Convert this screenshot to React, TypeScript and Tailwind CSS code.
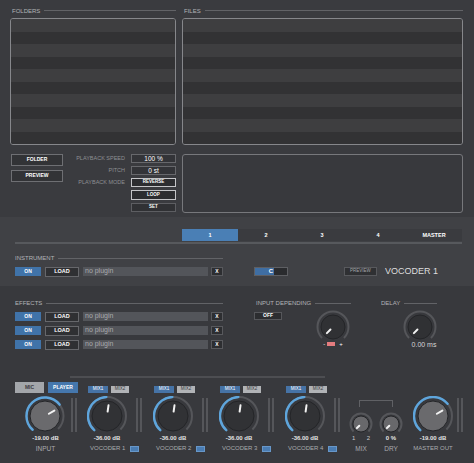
// App.tsx
type KnobProps = {
  size: number
  r: number
  inner: number
  fill: string
  angle: number
  arcTo?: number
}

function Knob({ size, r, inner, fill, angle, arcTo }: KnobProps) {
  const c = size / 2
  const pt = (a: number, rad: number) => [
    c + rad * Math.sin((a * Math.PI) / 180),
    c - rad * Math.cos((a * Math.PI) / 180),
  ]
  const arc = (a0: number, a1: number, rad: number) => {
    const [x0, y0] = pt(a0, rad)
    const [x1, y1] = pt(a1, rad)
    const large = a1 - a0 > 180 ? 1 : 0
    return `M${x0} ${y0} A${rad} ${rad} 0 ${large} 1 ${x1} ${y1}`
  }
  const [ix0, iy0] = pt(angle, inner * 0.3)
  const [ix1, iy1] = pt(angle, inner * 0.72)
  return (
    <svg width={size} height={size} viewBox={`0 0 ${size} ${size}`} className="block shrink-0">
      <path d={arc(-135, 135, r)} stroke="#55565a" strokeWidth={2} fill="none" />
      {arcTo !== undefined && (
        <path d={arc(-138, arcTo, r)} stroke="#5ea5dc" strokeWidth={2.4} fill="none" strokeLinecap="round" />
      )}
      <circle cx={c} cy={c} r={inner} fill={fill} stroke="#242528" strokeWidth={1} />
      <line x1={ix0} y1={iy0} x2={ix1} y2={iy1} stroke="#f2f2f2" strokeWidth={2} strokeLinecap="round" />
    </svg>
  )
}

function Caption({ text, className = '' }: { text: string; className?: string }) {
  return (
    <div className={`flex items-center gap-[4px] ${className}`}>
      <span className="text-[6px] leading-none text-[#b2b3b7] whitespace-nowrap">{text}</span>
      <div className="flex-1 h-px bg-[#626367]" />
    </div>
  )
}

function Striped() {
  return (
    <div className="h-[127px] border border-[#86878b] rounded-[3px] overflow-hidden flex flex-col">
      {[0, 1, 2, 3, 4, 5, 6, 7, 8, 9].map((i) => (
        <div key={i} className={i % 2 === 0 ? 'flex-1 bg-[#3e3e40]' : 'flex-1 bg-[#323234]'} />
      ))}
    </div>
  )
}

function PluginRow() {
  return (
    <div className="flex items-center h-[9px]">
      <div className="w-[26px] h-full bg-[#4073a9] flex items-center justify-center text-[5px] font-bold text-white">ON</div>
      <div className="ml-[4px] w-[34px] h-[10px] border border-[#66676b] bg-[#2f3033] flex items-center justify-center text-[5.5px] font-bold text-white">
        LOAD
      </div>
      <div className="ml-[4px] w-[125px] h-full bg-[#53555a] pl-[2px] flex items-center text-[7px] text-[#a9aaae]">no plugin</div>
      <div className="ml-[3px] w-[12px] h-full border border-[#58595d] bg-[#2d2e31] flex items-center justify-center text-[5px] font-bold text-white">
        X
      </div>
    </div>
  )
}

function Meters() {
  return (
    <div className="mt-[2px] flex gap-[2px]">
      <div className="w-[2px] h-[34px] bg-[#55565a]" />
      <div className="w-[2px] h-[34px] bg-[#55565a]" />
    </div>
  )
}

function VocoderColumn({ n }: { n: number }) {
  return (
    <div className="w-[66px] flex flex-col">
      <div className="h-[11px] flex items-end pl-[3px] gap-[3px]">
        <div className="w-[20px] h-[7px] bg-[#4673a6] flex items-center justify-center text-[4.5px] text-white">MIX1</div>
        <div className="w-[18px] h-[7px] bg-[#b1b3b6] flex items-center justify-center text-[4.5px] text-[#3b3c40]">MIX2</div>
      </div>
      <div className="mt-[3px] h-[40px] flex pl-[2px]">
        <Knob size={40} r={19} inner={15} fill="#313235" angle={8} arcTo={-2} />
        <div className="ml-[9px]">
          <Meters />
        </div>
      </div>
      <div className="-mt-[2px] ml-[2px] w-[40px] h-[8px] flex items-center justify-center text-[6px] font-bold text-[#e4e4e4] whitespace-nowrap">
        -36.00 dB
      </div>
      <div className="mt-[2px] h-[9px] pl-[5px] flex items-center gap-[5px]">
        <span className="text-[6px] text-[#a9aaae] whitespace-nowrap">VOCODER {n}</span>
        <div className="w-[9px] h-[6px] bg-[#4a7cb2] border border-[#6797c9]" />
      </div>
    </div>
  )
}

export default function App() {
  return (
    <div className="w-[474px] h-[463px] overflow-hidden font-['Liberation_Sans','Arial',sans-serif] select-none">
      {/* Browser */}
      <div className="h-[217px] bg-[#3a3b3f] px-[10px] pt-[3px]">
        <div className="flex gap-[6px]">
          <div className="w-[166px]">
            <Caption text="FOLDERS" className="h-[15px] pl-[2px]" />
            <Striped />
          </div>
          <div className="w-[281px]">
            <Caption text="FILES" className="h-[15px] pl-[2px]" />
            <Striped />
          </div>
        </div>
        <div className="flex gap-[6px] mt-[9px]">
          <div className="w-[166px] flex">
            <div className="w-[53px] pl-[1px] flex flex-col gap-[4px]">
              <div className="h-[12px] border border-[#6e6f73] bg-[#323336] flex items-center justify-center text-[5px] font-bold text-white">
                FOLDER
              </div>
              <div className="h-[12px] border border-[#6e6f73] bg-[#323336] flex items-center justify-center text-[5px] font-bold text-white">
                PREVIEW
              </div>
            </div>
            <div className="w-[62px] flex flex-col items-end gap-[3px] text-[5.5px] text-[#8e8f93]">
              <div className="h-[9px] flex items-center whitespace-nowrap">PLAYBACK SPEED</div>
              <div className="h-[9px] flex items-center">PITCH</div>
              <div className="h-[9px] flex items-center whitespace-nowrap">PLAYBACK MODE</div>
            </div>
            <div className="ml-[6px] w-[45px] flex flex-col gap-[3px]">
              <div className="h-[9px] border border-[#67686c] bg-[#333438] flex items-center justify-center text-[6.5px] text-white">100 %</div>
              <div className="h-[9px] border border-[#67686c] bg-[#333438] flex items-center justify-center text-[6.5px] text-white">0 st</div>
              <div className="h-[9px] border border-[#c4c5c8] bg-[#2c2d30] flex items-center justify-center text-[4.5px] font-bold text-white">
                REVERSE
              </div>
              <div className="h-[10px] border border-[#c4c5c8] bg-[#2c2d30] flex items-center justify-center text-[4.5px] font-bold text-white">
                LOOP
              </div>
              <div className="h-[9px] border border-[#5d5e62] bg-[#303134] flex items-center justify-center text-[4.5px] font-bold text-white">
                SET
              </div>
            </div>
          </div>
          <div className="w-[281px] h-[59px] border border-[#77787c] rounded-[3px] bg-[#38393d]" />
        </div>
      </div>

      {/* Tabs + instrument */}
      <div className="h-[69px] bg-[#404145] pt-[12px]">
        <div className="flex justify-end pr-[12px]">
          <div className="w-[280px] h-[12px] flex bg-[#3a3b3f] text-[5.5px] font-bold text-white">
            <div className="flex-1 bg-[#4a7fb5] flex items-center justify-center">1</div>
            <div className="flex-1 flex items-center justify-center">2</div>
            <div className="flex-1 flex items-center justify-center">3</div>
            <div className="flex-1 flex items-center justify-center">4</div>
            <div className="flex-1 flex items-center justify-center">MASTER</div>
          </div>
        </div>
        <div className="mt-[1px] ml-[15px] w-[447px] h-[2px] bg-[#57595d]" />
        <div className="mt-[9px] flex pl-[15px]">
          <div className="w-[208px]">
            <Caption text="INSTRUMENT" className="h-[10px]" />
            <div className="mt-[4px]">
              <PluginRow />
            </div>
          </div>
          <div className="mt-[14px] ml-[31px] h-[9px] flex items-center">
            <div className="w-[34px] h-[9px] border border-[#5e5f63] bg-[linear-gradient(to_right,#3f6ea3_58%,#2a2b2e_58%)] flex items-center justify-center text-[6px] font-bold text-white">
              C
            </div>
            <div className="ml-[56px] w-[33px] h-[9px] border border-[#58595d] bg-[#2f3033] flex items-center justify-center text-[4.5px] text-[#a6a7ab]">
              PREVIEW
            </div>
            <div className="ml-[8px] text-[9px] leading-none text-[#dedede] whitespace-nowrap">VOCODER 1</div>
          </div>
        </div>
      </div>

      {/* Effects + mixer */}
      <div className="h-[177px] bg-[#38393d] pt-[12px]">
        <div className="flex pl-[15px]">
          <div className="w-[208px]">
            <Caption text="EFFECTS" className="h-[10px]" />
            <div className="mt-[4px] flex flex-col gap-[5px]">
              <PluginRow />
              <PluginRow />
              <PluginRow />
            </div>
          </div>
          <div className="ml-[31px] w-[97px]">
            <Caption text="INPUT DEPENDING" className="h-[10px] pl-[2px]" />
            <div className="mt-[4px] flex">
              <div className="w-[28px] h-[8px] border border-[#56575b] bg-[#2c2d30] flex items-center justify-center text-[5px] font-bold text-white">
                OFF
              </div>
              <div className="ml-[34px] -mt-[2px] w-[34px] flex flex-col items-center">
                <Knob size={34} r={15.5} inner={12} fill="#303134" angle={-135} />
                <div className="-mt-[4px] h-[7px] flex items-center gap-[2px] text-[6px] text-white leading-none">
                  <span>-</span>
                  <div className="w-[8px] h-[4px] bg-[#e47c7f]" />
                  <span className="ml-[2px]">+</span>
                </div>
              </div>
            </div>
          </div>
          <div className="ml-[30px] w-[56px]">
            <Caption text="DELAY" className="h-[10px]" />
            <div className="mt-[2px] ml-[22px] w-[34px] flex flex-col items-center">
              <Knob size={34} r={15.5} inner={12} fill="#303134" angle={-135} />
              <div className="-mt-[3px] h-[8px] pl-[8px] flex items-center text-[7px] text-[#d6d6d6] whitespace-nowrap">0.00 ms</div>
            </div>
          </div>
        </div>

        <div className="mt-[27px] ml-[70px] w-[255px] h-[2px] bg-[#4d4e52]" />

        <div className="mt-[4px] flex pl-[15px]">
          {/* Input */}
          <div className="w-[70px] flex flex-col">
            <div className="h-[11px] flex gap-[4px]">
              <div className="w-[29px] h-full bg-[#a3a6aa] flex items-center justify-center text-[5px] font-bold text-[#3a3b3f]">MIC</div>
              <div className="w-[30px] h-full bg-[#4577ad] flex items-center justify-center text-[5px] font-bold text-white">PLAYER</div>
            </div>
            <div className="mt-[3px] h-[40px] flex pl-[10px]">
              <Knob size={40} r={18.5} inner={15} fill="#6a6a6d" angle={60} arcTo={52} />
              <div className="ml-[6px]">
                <Meters />
              </div>
            </div>
            <div className="-mt-[2px] w-[61px] h-[8px] flex items-center justify-center text-[6px] font-bold text-[#e4e4e4] whitespace-nowrap">
              -19.00 dB
            </div>
            <div className="mt-[2px] w-[61px] h-[9px] flex items-center justify-center text-[6.5px] text-[#a9aaae]">INPUT</div>
          </div>

          <VocoderColumn n={1} />
          <VocoderColumn n={2} />
          <VocoderColumn n={3} />
          <VocoderColumn n={4} />

          {/* Mix / Dry */}
          <div className="w-[60px] flex flex-col">
            <div className="h-[14px]" />
            <div className="mt-[4px] ml-[10px] w-[34px] h-[7px] border-t border-x border-[#606165]" />
            <div className="mt-[5px] flex gap-[6px]">
              <div className="w-[24px] flex flex-col items-center">
                <Knob size={24} r={10.5} inner={8} fill="#68686b" angle={-135} />
                <div className="-mt-[1px] w-full h-[7px] px-[3px] flex items-center justify-between text-[6px] text-[#c9c9cb]">
                  <span>1</span>
                  <span>2</span>
                </div>
                <div className="mt-[2px] h-[9px] flex items-center text-[6.5px] text-[#a9aaae]">MIX</div>
              </div>
              <div className="w-[24px] flex flex-col items-center">
                <Knob size={24} r={10.5} inner={8} fill="#68686b" angle={-135} />
                <div className="-mt-[1px] h-[7px] flex items-center text-[6px] font-bold text-[#e4e4e4] whitespace-nowrap">0 %</div>
                <div className="mt-[2px] h-[9px] flex items-center text-[6.5px] text-[#a9aaae]">DRY</div>
              </div>
            </div>
          </div>

          {/* Master */}
          <div className="w-[65px] flex flex-col">
            <div className="h-[11px]" />
            <div className="mt-[3px] h-[40px] flex pl-[4px]">
              <Knob size={40} r={19} inner={15} fill="#6a6a6d" angle={60} arcTo={50} />
              <div className="ml-[4px]">
                <Meters />
              </div>
            </div>
            <div className="-mt-[2px] w-[48px] h-[8px] flex items-center justify-center text-[6px] font-bold text-[#e4e4e4] whitespace-nowrap">
              -19.00 dB
            </div>
            <div className="mt-[2px] w-[48px] h-[9px] flex items-center justify-center text-[6px] text-[#a9aaae] whitespace-nowrap">
              MASTER OUT
            </div>
          </div>
        </div>
      </div>
    </div>
  )
}
